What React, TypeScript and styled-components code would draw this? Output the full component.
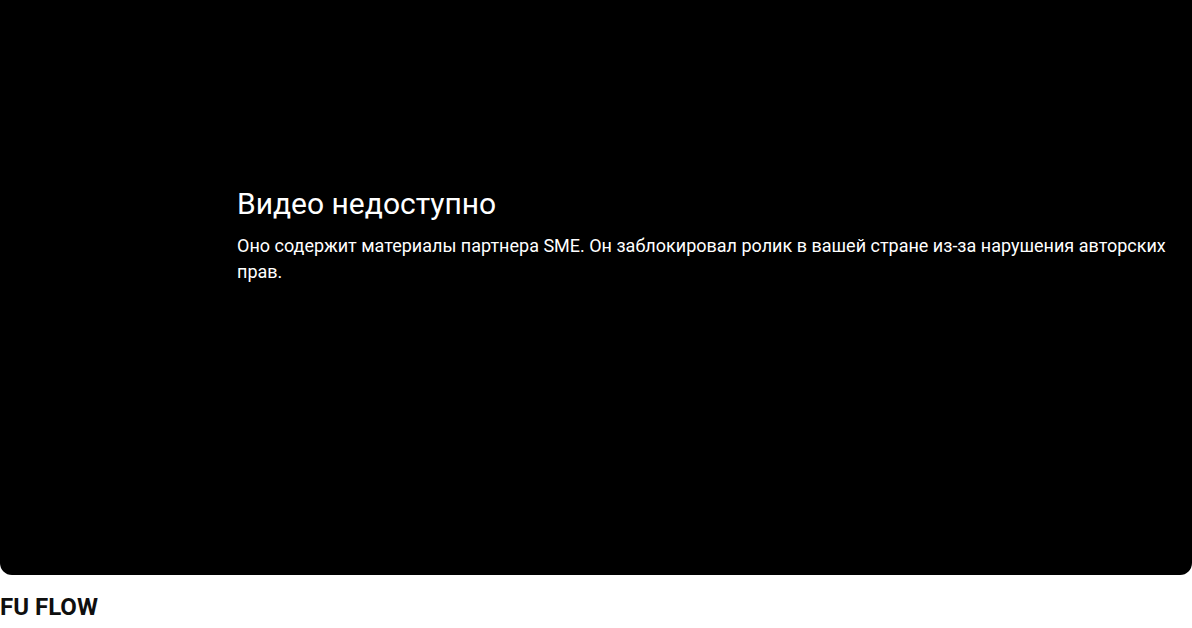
import React from 'react';
import styled, { createGlobalStyle } from 'styled-components';

const Global = createGlobalStyle`
  html, body {
    margin: 0;
    padding: 0;
    background: #fff;
    overflow: hidden;
  }
  body {
    font-family: Roboto, Arial, sans-serif;
  }
`;

const Page = styled.div`
  width: 1192px;
  height: 628px;
  display: flex;
  flex-direction: column;
`;

const Player = styled.div`
  height: 575px;
  background: #000;
  border-radius: 0 0 12px 12px;
  box-sizing: border-box;
  padding: 183px 20px 0 237px;
  color: #fff;
  display: flex;
  flex-direction: column;
`;

const Reason = styled.div`
  font-size: 30px;
  line-height: 42px;
  font-weight: 400;
  margin-bottom: 8px;
`;

const SubReason = styled.div`
  font-size: 18px;
  line-height: 26px;
  font-weight: 400;
`;

const Title = styled.h1`
  margin: 0;
  padding: 16px 0 0 0;
  font-size: 24px;
  line-height: 32px;
  font-weight: 700;
  color: #0f0f0f;
`;

export default function App() {
  return (
    <Page>
      <Global />
      <Player>
        <Reason>Видео недоступно</Reason>
        <SubReason>
          Оно содержит материалы партнера SME. Он заблокировал ролик в вашей
          стране из-за нарушения авторских прав.
        </SubReason>
      </Player>
      <Title>FU FLOW</Title>
    </Page>
  );
}
